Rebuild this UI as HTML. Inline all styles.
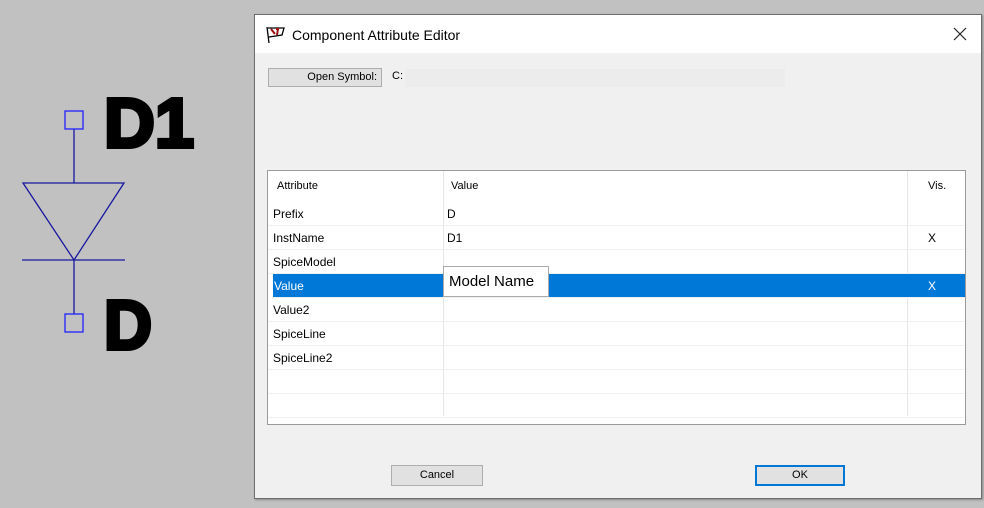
<!DOCTYPE html><html><head><style>
body{margin:0;width:984px;height:508px;background:#c1c1c1;position:relative;overflow:hidden;font-family:"Liberation Sans",sans-serif}
.a{position:absolute}
.dlg{left:254px;top:14px;width:726px;height:483px;border:1px solid #6d6d6d;background:#f0f0f0;box-shadow:1px 1px 2px #888}
.tb{left:0;top:0;width:726px;height:38px;background:#fff}
.t{font-size:12px;color:#000}
.btn{background:#e1e1e1;border:1px solid #adadad;font-size:12px;text-align:center;box-sizing:border-box}
.row{left:0;width:697px;height:24px;border-bottom:1px solid #f0f0f0;box-sizing:border-box;font-size:12px}
.row span{position:absolute;top:5px}
</style></head><body>
<svg class="a" style="left:0;top:0" width="250" height="400">
<g stroke="#1818a0" stroke-width="1.3" fill="none">
<line x1="74" y1="129" x2="74" y2="183"/><polygon points="23,183 124,183 74,260"/><line x1="22" y1="260" x2="125" y2="260"/><line x1="74" y1="260" x2="74" y2="314"/></g>
<rect x="65" y="111" width="18" height="18" fill="none" stroke="#2020ff" stroke-width="1.3"/>
<rect x="65" y="314" width="18" height="18" fill="none" stroke="#2020ff" stroke-width="1.3"/>
<text x="104" y="147" font-family="Liberation Sans" font-weight="bold" font-size="70" fill="#000" stroke="#000" stroke-width="4" textLength="90" lengthAdjust="spacingAndGlyphs">D1</text>
<text x="104" y="349" font-family="Liberation Sans" font-weight="bold" font-size="70" fill="#000" stroke="#000" stroke-width="4" textLength="48" lengthAdjust="spacingAndGlyphs">D</text>
</svg>
<div class="a dlg">
<div class="a tb"></div>
<svg class="a" style="left:10px;top:10px" width="22" height="20"><path d="M2 2 L4 18 M3 3 L19 3 L17 10 L4 12" stroke="#000" fill="none" stroke-width="1.3"/><path d="M6 4 L10 9 M11 4 L14 4 M13 4 L12 10" stroke="#a01010" stroke-width="2" fill="none"/></svg>
<div class="a" style="left:37px;top:12px;font-size:14px;color:#000">Component Attribute Editor</div>
<svg class="a" style="left:698px;top:12px" width="14" height="14"><path d="M1 1L13 13M13 1L1 13" stroke="#222" stroke-width="1.2"/></svg>
<div class="a btn" style="left:13px;top:53px;width:114px;height:19px;padding-right:4px;text-align:right;line-height:17px;font-size:11px">Open Symbol:</div>
<div class="a t" style="left:137px;top:55px;font-size:11px">C:</div>
<div class="a" style="left:150px;top:54px;width:380px;height:18px;background:#ececec"></div>
<div class="a" style="left:12px;top:155px;width:697px;height:253px;border:1px solid #9a9a9a;background:#fff">
<div class="a" style="left:175px;top:0;width:1px;height:245px;background:#e6e6e6"></div>
<div class="a" style="left:639px;top:0;width:1px;height:245px;background:#e6e6e6"></div>
<div class="a t" style="left:9px;top:9px;font-size:11px">Attribute</div>
<div class="a t" style="left:183px;top:9px;font-size:11px">Value</div>
<div class="a t" style="left:660px;top:9px;font-size:11px">Vis.</div>
<div class="a row" style="top:31px"><span style="left:5px">Prefix</span><span style="left:179px">D</span></div>
<div class="a row" style="top:55px"><span style="left:5px">InstName</span><span style="left:179px">D1</span><span style="left:660px">X</span></div>
<div class="a row" style="top:79px"><span style="left:5px">SpiceModel</span></div>
<div class="a row" style="top:103px;background:#0078d7;color:#fff;left:5px;width:692px"><span style="left:1px">Value</span><span style="left:655px">X</span></div>
<div class="a row" style="top:127px"><span style="left:5px">Value2</span></div>
<div class="a row" style="top:151px"><span style="left:5px">SpiceLine</span></div>
<div class="a row" style="top:175px"><span style="left:5px">SpiceLine2</span></div>
<div class="a row" style="top:199px"></div>
<div class="a row" style="top:223px"></div>
<div class="a" style="left:175px;top:95px;width:106px;height:31px;background:#fff;border:1px solid #aaa;box-sizing:border-box;font-size:15px;line-height:29px;padding-left:5px;color:#000">Model Name</div>
</div>
<div class="a btn" style="left:136px;top:450px;width:92px;height:21px;line-height:19px;font-size:11px">Cancel</div>
<div class="a btn" style="left:500px;top:450px;width:90px;height:21px;line-height:17px;border:2px solid #0078d7;font-size:11px">OK</div>
</div>
</body></html>
